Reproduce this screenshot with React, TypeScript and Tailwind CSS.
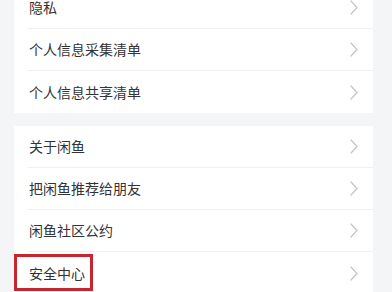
import React from 'react'

const Chevron = () => (
  <svg width="8" height="15" viewBox="0 0 8 15" fill="none">
    <polyline points="1,1 7,7.5 1,14" stroke="#c4c4c4" strokeWidth="1.2" strokeLinecap="round" strokeLinejoin="round" />
  </svg>
)

const Row = ({ title, last, marked }: { title: string; last?: boolean; marked?: boolean }) => (
  <div className="relative pl-[14px]">
    <div className={`flex h-[42px] items-center justify-between pl-[1px] pr-[15px] ${last ? '' : 'border-b border-[#f0f0f2]'}`}>
      <span className="text-[14px] text-[#333333]">{title}</span>
      <Chevron />
    </div>
    {marked && <div className="absolute left-0 top-[2px] h-[37px] w-[79px] border-[3px] border-[#c8262f]" />}
  </div>
)

export default function App() {
  const first = ['隐私', '个人信息采集清单', '个人信息共享清单']
  const second = ['关于闲鱼', '把闲鱼推荐给朋友', '闲鱼社区公约', '安全中心']
  return (
    <div
      className="h-[292px] w-[392px] overflow-hidden bg-[#f4f5f7]"
      style={{ fontFamily: '"Noto Sans CJK SC", "Noto Sans", sans-serif' }}
    >
      <div className="ml-[14px] mt-[-13px] w-[359px] bg-white">
        {first.map((t, i) => (
          <Row key={t} title={t} last={i === first.length - 1} />
        ))}
      </div>
      <div className="ml-[14px] mt-[13px] w-[359px] bg-white">
        {second.map((t, i) => (
          <Row key={t} title={t} last={i === second.length - 1} marked={t === '安全中心'} />
        ))}
      </div>
    </div>
  )
}
